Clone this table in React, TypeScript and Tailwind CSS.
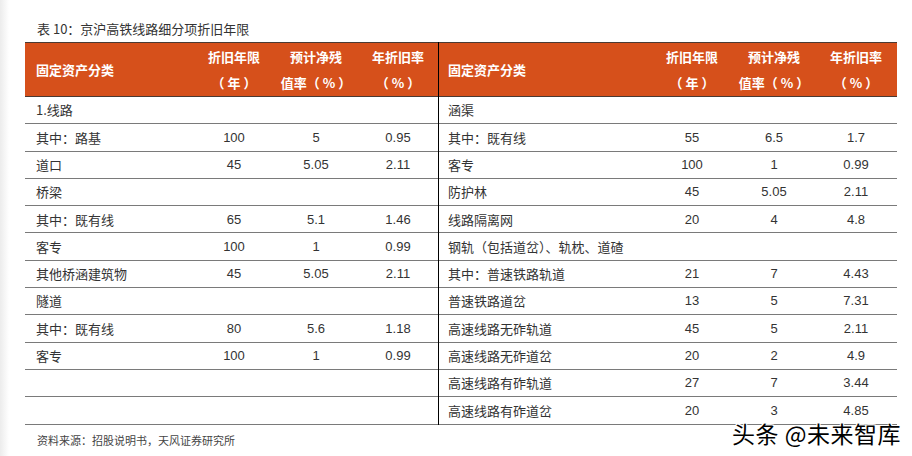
const font = { fontFamily: '"Liberation Sans", "Noto Sans CJK SC", sans-serif' };
const cjk = { fontFamily: '"Noto Sans CJK SC", "Liberation Sans", sans-serif' };

type Row = [string, string, string, string];

const leftRows: Row[] = [
  ["1.线路", "", "", ""],
  ["其中：路基", "100", "5", "0.95"],
  ["道口", "45", "5.05", "2.11"],
  ["桥梁", "", "", ""],
  ["其中：既有线", "65", "5.1", "1.46"],
  ["客专", "100", "1", "0.99"],
  ["其他桥涵建筑物", "45", "5.05", "2.11"],
  ["隧道", "", "", ""],
  ["其中：既有线", "80", "5.6", "1.18"],
  ["客专", "100", "1", "0.99"],
  ["", "", "", ""],
  ["", "", "", ""],
];

const rightRows: Row[] = [
  ["涵渠", "", "", ""],
  ["其中：既有线", "55", "6.5", "1.7"],
  ["客专", "100", "1", "0.99"],
  ["防护林", "45", "5.05", "2.11"],
  ["线路隔离网", "20", "4", "4.8"],
  ["钢轨（包括道岔）、轨枕、道碴", "", "", ""],
  ["其中：普速铁路轨道", "21", "7", "4.43"],
  ["普速铁路道岔", "13", "5", "7.31"],
  ["高速线路无砟轨道", "45", "5", "2.11"],
  ["高速线路无砟道岔", "20", "2", "4.9"],
  ["高速线路有砟轨道", "27", "7", "3.44"],
  ["高速线路有砟道岔", "20", "3", "4.85"],
];

const HalfTable = ({ rows, cols, pad }: { rows: Row[]; cols: string; pad: string }) => (
  <div className="flex-1">
    <div
      className={`grid ${cols} h-[55px] bg-[#d6501b] border-t border-b border-[#4a3a33] text-white font-bold text-[13px]`}
      style={cjk}
    >
      <div className={`flex items-center ${pad}`}>固定资产分类</div>
      <div className="flex flex-col items-center justify-center gap-[8px] leading-[18px]">
        <span>折旧年限</span>
        <span>（ 年 ）</span>
      </div>
      <div className="flex flex-col items-center justify-center gap-[8px] leading-[18px]">
        <span>预计净残</span>
        <span>值率（ % ）</span>
      </div>
      <div className="flex flex-col items-center justify-center gap-[8px] leading-[18px]">
        <span>年折旧率</span>
        <span>（ % ）</span>
      </div>
    </div>
    {rows.map((r, i) => (
      <div key={i} className={`grid ${cols} h-[27.3px] items-center text-[13px] text-[#333] border-b border-[#7a7a7a]`}>
        <div className={`${pad} whitespace-nowrap`} style={cjk}>
          {r[0]}
        </div>
        <div className="text-center">{r[1]}</div>
        <div className="text-center">{r[2]}</div>
        <div className="text-center">{r[3]}</div>
      </div>
    ))}
  </div>
);

export default function App() {
  return (
    <div className="relative flex w-[912px] h-[456px] bg-white overflow-hidden" style={font}>
      <div className="w-[9px] bg-gradient-to-r from-[#ececec] to-white" />
      <div className="flex-1 pl-[16px] pr-[14px]">
        <div className="h-[42px] pt-[20px] pl-[12px] text-[13px] text-[#333] leading-[18px]" style={cjk}>
          表 10：京沪高铁线路细分项折旧年限
        </div>
        <div className="flex">
          <div className="w-[414px] border-r border-black">
            <HalfTable rows={leftRows} cols="grid-cols-[168px_82px_82px_82px]" pad="pl-[11px]" />
          </div>
          <div className="w-[458px] flex">
            <HalfTable rows={rightRows} cols="grid-cols-[212px_82px_82px_82px]" pad="pl-[9px]" />
          </div>
        </div>
        <div className="pt-[7px] pl-[12px] text-[11px] text-[#444]" style={cjk}>
          资料来源：招股说明书，天风证券研究所
        </div>
      </div>
      <div
        className="absolute left-[732px] top-[418px] text-[23px] text-black leading-[30px] tracking-[0.5px]"
        style={{ fontFamily: '"Noto Sans CJK SC", sans-serif', textShadow: "1px 1px 0 #fff, -1px -1px 0 #fff, 1px -1px 0 #fff, -1px 1px 0 #fff" }}
      >
        头条 @未来智库
      </div>
    </div>
  );
}
